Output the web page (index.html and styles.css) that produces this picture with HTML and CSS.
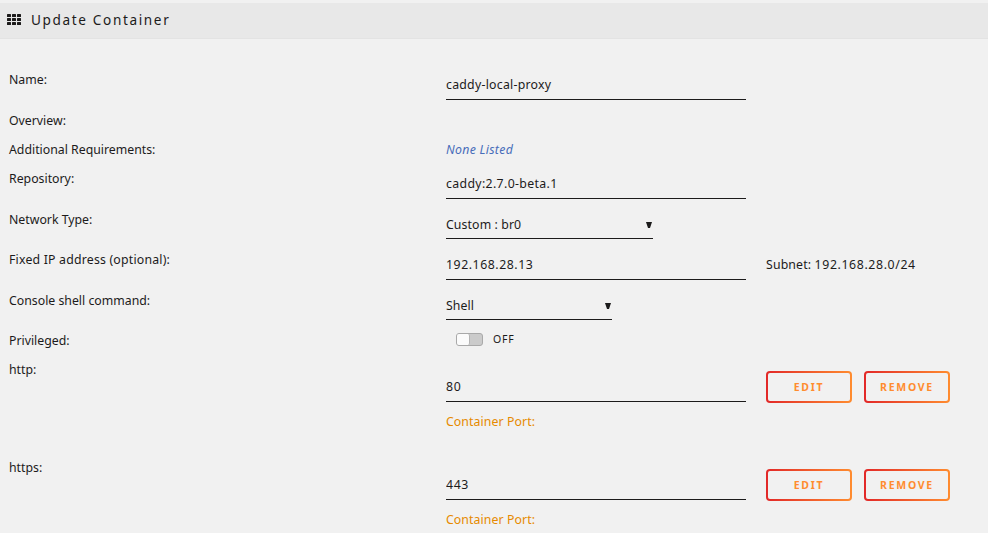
FILE: index.html
```html
<!DOCTYPE html>
<html lang="en">
<head>
    <meta charset="UTF-8">
    <meta name="viewport" content="width=device-width, initial-scale=1.0">
    <title>Update Container</title>
    <link rel="stylesheet" href="styles.css">
</head>
<body>
    <div class="title">
        <svg class="title-icon" width="14" height="11" viewBox="0 0 14 11" fill="#1c1b1b">
            <rect x="0" y="0" width="4" height="3" rx=".5"/>
            <rect x="5" y="0" width="4" height="3" rx=".5"/>
            <rect x="10" y="0" width="4" height="3" rx=".5"/>
            <rect x="0" y="4" width="4" height="3" rx=".5"/>
            <rect x="5" y="4" width="4" height="3" rx=".5"/>
            <rect x="10" y="4" width="4" height="3" rx=".5"/>
            <rect x="0" y="8" width="4" height="3" rx=".5"/>
            <rect x="5" y="8" width="4" height="3" rx=".5"/>
            <rect x="10" y="8" width="4" height="3" rx=".5"/>
        </svg>
        <h1>Update Container</h1>
    </div>

    <form class="settings">
        <div class="row">
            <label>Name:</label>
            <input class="field" type="text" value="caddy-local-proxy">
        </div>
        <div class="row short">
            <label>Overview:</label>
        </div>
        <div class="row short">
            <label>Additional Requirements:</label>
            <em class="none">None Listed</em>
        </div>
        <div class="row">
            <label>Repository:</label>
            <input class="field repo" type="text" value="caddy:2.7.0-beta.1">
        </div>
        <div class="row">
            <label>Network Type:</label>
            <div class="select network">
                <span>Custom : br0</span>
                <svg width="6" height="6" viewBox="0 0 6 6"><path d="M0 0h6L4 6H2z" fill="#1c1b1b"/></svg>
            </div>
        </div>
        <div class="row">
            <label class="wide">Fixed IP address (optional):</label>
            <input class="field ip" type="text" value="192.168.28.13">
            <span class="subnet">Subnet: <span class="address">192.168.28.0/24</span></span>
        </div>
        <div class="row">
            <label>Console shell command:</label>
            <div class="select shell">
                <span>Shell</span>
                <svg width="6" height="6" viewBox="0 0 6 6"><path d="M0 0h6L4 6H2z" fill="#1c1b1b"/></svg>
            </div>
        </div>
        <div class="row short">
            <label>Privileged:</label>
            <div class="switch">
                <div class="switch-track"><div class="switch-knob"></div></div>
                <span>OFF</span>
            </div>
        </div>
        <div class="row port">
            <label>http:</label>
            <div class="port-value">
                <input class="field" type="text" value="80">
                <div class="port-note">Container Port:</div>
            </div>
            <div class="buttons">
                <button type="button">EDIT</button>
                <button type="button">REMOVE</button>
            </div>
        </div>
        <div class="row port">
            <label>https:</label>
            <div class="port-value">
                <input class="field" type="text" value="443">
                <div class="port-note">Container Port:</div>
            </div>
            <div class="buttons">
                <button type="button">EDIT</button>
                <button type="button">REMOVE</button>
            </div>
        </div>
    </form>
</body>
</html>
```

FILE: styles.css
```css
* {
    box-sizing: border-box;
}

body {
    margin: 0;
    padding-top: 3px;
    height: 533px;
    overflow: hidden;
    background: #f1f1f1;
    color: #1c1b1b;
    font-family: "Noto Sans", "Open Sans", sans-serif;
    font-size: 12.3px;
    line-height: 17px;
}

.title {
    display: flex;
    align-items: center;
    height: 36px;
    padding: 0 7px 2px;
    background: #e8e8e8;
    border-bottom: 1px solid #e3e3e3;
}

.title-icon {
    margin-right: 10px;
}

h1 {
    margin: 0;
    font-size: 13.6px;
    font-weight: normal;
    letter-spacing: 1.63px;
}

.settings {
    padding: 32px 9px 0;
}

.row {
    display: flex;
    align-items: flex-start;
    height: 40.5px;
}

.row:first-child {
    height: 41px;
}

.row.short {
    height: 29px;
}

.row.port {
    height: 98px;
}

label {
    width: 437px;
    flex: none;
}

label.wide {
    letter-spacing: .2px;
}

.field {
    width: 300px;
    height: 29px;
    padding: 2px 0 4px;
    border: none;
    border-bottom: 1px solid #1c1b1b;
    border-radius: 0;
    outline: none;
    background: transparent;
    color: #1c1b1b;
    font: inherit;
    letter-spacing: .25px;
}

.field.repo {
    letter-spacing: .35px;
}

.field.ip {
    letter-spacing: .55px;
}

.none {
    color: #486dba;
    letter-spacing: .3px;
}

.select {
    display: flex;
    align-items: center;
    justify-content: space-between;
    height: 28px;
    padding: 0 1px 0 0;
    border-bottom: 1px solid #1c1b1b;
    letter-spacing: .1px;
}

.select svg {
    margin-top: 1px;
}

.network {
    width: 207px;
}

.shell {
    width: 166px;
}

.subnet {
    margin: 5px 0 0 20px;
    letter-spacing: .15px;
}

.address {
    letter-spacing: .62px;
}

.switch {
    display: flex;
    align-items: center;
    height: 15px;
    margin-left: 10px;
    font-size: 10.5px;
    letter-spacing: .8px;
}

.switch-track {
    width: 27px;
    height: 13px;
    margin-right: 10px;
    background: #cbcbcb;
    border: 1px solid #a9a9a9;
    border-radius: 3px;
}

.switch-knob {
    width: 13px;
    height: 11px;
    background: #fbfbfb;
    border-right: 1px solid #b4b4b4;
    border-radius: 2px;
}

.port-value {
    padding-top: 12px;
}

.port-value .field {
    display: block;
    letter-spacing: .6px;
}

.port-note {
    margin-top: 11px;
    color: #e68a00;
    letter-spacing: .08px;
}

.buttons {
    display: flex;
    gap: 12px;
    padding: 10px 0 0 20px;
}

button {
    width: 86px;
    height: 32px;
    padding: 0;
    border: 2px solid transparent;
    border-radius: 4px;
    background: linear-gradient(#f1f1f1, #f1f1f1) padding-box,
        linear-gradient(90deg, #e22828, #ff8c2f) border-box;
    color: #ff8c2f;
    font-family: inherit;
    font-size: 10.5px;
    font-weight: bold;
    letter-spacing: 1.7px;
}
```
